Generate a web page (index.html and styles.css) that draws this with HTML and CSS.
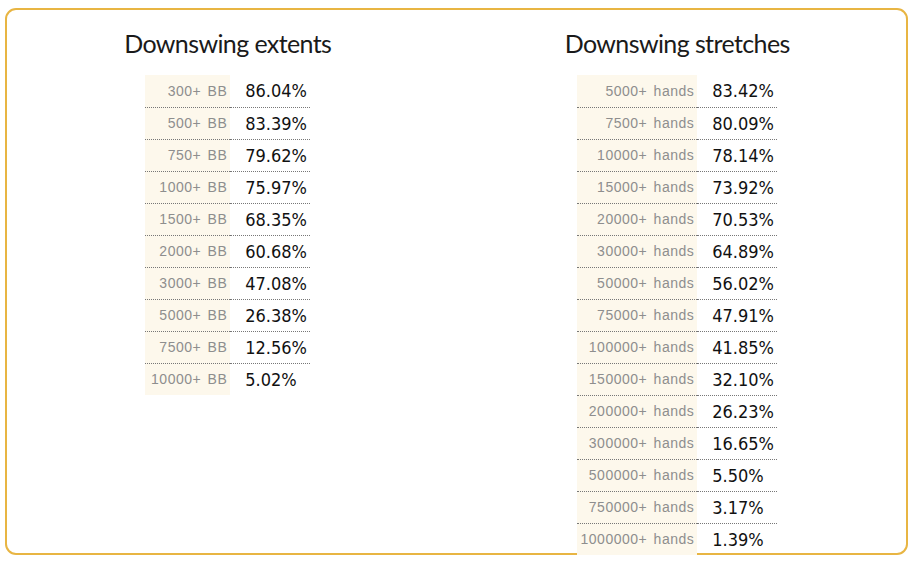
FILE: index.html
```html
<!DOCTYPE html>
<html>
<head>
<meta charset="utf-8">
<link rel="stylesheet" href="styles.css">
</head>
<body>
<div class="box">
  <section class="col">
    <h2 class="title">Downswing extents</h2>
    <table class="stats">
      <tr><th>300+ BB</th><td>86.04%</td></tr>
      <tr><th>500+ BB</th><td>83.39%</td></tr>
      <tr><th>750+ BB</th><td>79.62%</td></tr>
      <tr><th>1000+ BB</th><td>75.97%</td></tr>
      <tr><th>1500+ BB</th><td>68.35%</td></tr>
      <tr><th>2000+ BB</th><td>60.68%</td></tr>
      <tr><th>3000+ BB</th><td>47.08%</td></tr>
      <tr><th>5000+ BB</th><td>26.38%</td></tr>
      <tr><th>7500+ BB</th><td>12.56%</td></tr>
      <tr><th>10000+ BB</th><td>5.02%</td></tr>
    </table>
  </section>
  <section class="col">
    <h2 class="title">Downswing stretches</h2>
    <table class="stats wide">
      <tr><th>5000+ hands</th><td>83.42%</td></tr>
      <tr><th>7500+ hands</th><td>80.09%</td></tr>
      <tr><th>10000+ hands</th><td>78.14%</td></tr>
      <tr><th>15000+ hands</th><td>73.92%</td></tr>
      <tr><th>20000+ hands</th><td>70.53%</td></tr>
      <tr><th>30000+ hands</th><td>64.89%</td></tr>
      <tr><th>50000+ hands</th><td>56.02%</td></tr>
      <tr><th>75000+ hands</th><td>47.91%</td></tr>
      <tr><th>100000+ hands</th><td>41.85%</td></tr>
      <tr><th>150000+ hands</th><td>32.10%</td></tr>
      <tr><th>200000+ hands</th><td>26.23%</td></tr>
      <tr><th>300000+ hands</th><td>16.65%</td></tr>
      <tr><th>500000+ hands</th><td>5.50%</td></tr>
      <tr><th>750000+ hands</th><td>3.17%</td></tr>
      <tr><th>1000000+ hands</th><td>1.39%</td></tr>
    </table>
  </section>
</div>
</body>
</html>
```
FILE: styles.css
```css
html, body {
  margin: 0;
  padding: 0;
  background: #fff;
}
body {
  padding: 8px 9px 0 5px;
}
.box {
  box-sizing: border-box;
  height: 547px;
  border: 2px solid #e8b543;
  border-radius: 11px;
  display: grid;
  grid-template-columns: 1fr 1fr;
  align-items: start;
}
.col {
  display: flex;
  flex-direction: column;
  align-items: center;
  margin-right: 8px;
}
.title {
  margin: 16px 0 0;
  height: 49px;
  font-family: Lato, sans-serif;
  font-weight: 400;
  font-size: 25px;
  line-height: 34px;
  color: #1a1a1a;
  letter-spacing: -0.6px;
}
.stats {
  border-collapse: collapse;
}
.stats tr {
  height: 32px;
}
.stats tr + tr {
  border-top: 1px dotted #777;
}
.stats th {
  background: #fdf8ec;
  font-family: "Liberation Sans", Arial, sans-serif;
  font-weight: 400;
  font-size: 14px;
  letter-spacing: 0.5px;
  word-spacing: 2px;
  color: #8e8e8e;
  text-align: right;
  padding: 0 3px 0 0;
  width: 82px;
  vertical-align: middle;
}
.stats.wide th {
  width: 117px;
}
.stats td {
  font-family: "DejaVu Sans Condensed", "DejaVu Sans", sans-serif;
  font-size: 18px;
  color: #111;
  padding: 0 0 0 15px;
  width: 65px;
  vertical-align: middle;
}
```
